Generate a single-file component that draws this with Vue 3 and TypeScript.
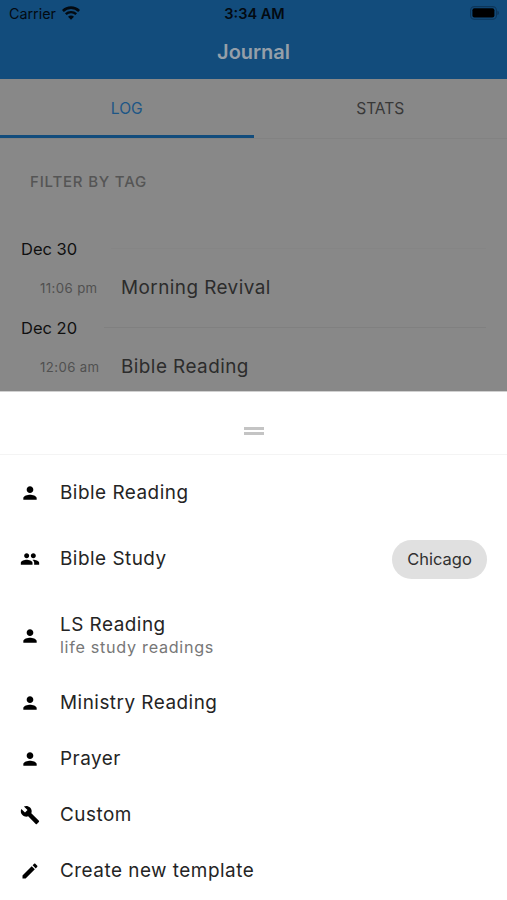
<script setup lang="ts">
type IconName = 'person' | 'people' | 'build' | 'edit'

interface Template {
  label: string
  icon: IconName
  kind?: 'tagged' | 'detailed'
  note?: string
  tag?: string
}

interface Entry {
  day: string
  time: string
  title: string
}

const icons: Record<IconName, string> = {
  person: 'M12 12c2.21 0 4-1.79 4-4s-1.79-4-4-4-4 1.79-4 4 1.79 4 4 4zm0 2c-2.67 0-8 1.34-8 4v2h16v-2c0-2.66-5.33-4-8-4z',
  people: 'M16 11c1.66 0 2.99-1.34 2.99-3S17.66 5 16 5c-1.66 0-3 1.34-3 3s1.34 3 3 3zm-8 0c1.66 0 2.99-1.34 2.99-3S9.66 5 8 5C6.34 5 5 6.34 5 8s1.34 3 3 3zm0 2c-2.33 0-7 1.17-7 3.5V19h14v-2.5c0-2.33-4.67-3.5-7-3.5zm8 0c-.29 0-.62.02-.97.05 1.16.84 1.97 1.97 1.97 3.45V19h6v-2.5c0-2.33-4.67-3.5-7-3.5z',
  build: 'M22.7 19l-9.1-9.1c.9-2.3.4-5-1.5-6.9-2-2-5-2.4-7.4-1.3L9 6 6 9 1.6 4.7C.4 7.1.9 10.1 2.9 12.1c1.9 1.9 4.6 2.4 6.9 1.5l9.1 9.1c.4.4 1 .4 1.4 0l2.3-2.3c.5-.4.5-1.1.1-1.4z',
  edit: 'M3 17.25V21h3.75L17.81 9.94l-3.75-3.75L3 17.25zM20.71 7.04c.39-.39.39-1.02 0-1.41l-2.34-2.34c-.39-.39-1.02-.39-1.41 0l-1.83 1.83 3.75 3.75 1.83-1.83z',
}

const entries: Entry[] = [
  { day: 'Dec 30', time: '11:06 pm', title: 'Morning Revival' },
  { day: 'Dec 20', time: '12:06 am', title: 'Bible Reading' },
]

const templates: Template[] = [
  { label: 'Bible Reading', icon: 'person' },
  { label: 'Bible Study', icon: 'people', kind: 'tagged', tag: 'Chicago' },
  { label: 'LS Reading', icon: 'person', kind: 'detailed', note: 'life study readings' },
  { label: 'Ministry Reading', icon: 'person' },
  { label: 'Prayer', icon: 'person' },
  { label: 'Custom', icon: 'build' },
  { label: 'Create new template', icon: 'edit' },
]
</script>

<template>
  <div class="screen">
    <div class="page">
      <header class="bar">
        <div class="status">
          <div class="carrier">
            <span>Carrier</span>
            <svg class="wifi" viewBox="0 0 18 14" fill="none" stroke="#030a11">
              <path d="M.9 5C5.5.5 12.5.5 17.1 5" stroke-width="2.6" />
              <path d="M3.8 8.2C6.7 5.4 11.3 5.4 14.2 8.2" stroke-width="2.4" />
              <path d="M9 13.8L6 10.8C7.7 9.2 10.3 9.2 12 10.8Z" fill="#030a11" stroke="none" />
            </svg>
          </div>
          <span class="clock">3:34 AM</span>
          <svg class="battery" viewBox="0 0 30 14">
            <rect x=".6" y=".6" width="25.8" height="12.6" rx="3.8" fill="none" stroke="#0d365a" stroke-width="1.1" />
            <rect x="2.4" y="2.3" width="22" height="9.2" rx="2" fill="#000" />
            <path d="M27.4 4.7c2 .6 2 3.8 0 4.4z" fill="#0d365a" />
          </svg>
        </div>
        <h1 class="title">Journal</h1>
      </header>
      <nav class="tabs">
        <span class="tab active">LOG</span>
        <span class="tab">STATS</span>
      </nav>
      <p class="filter">FILTER BY TAG</p>
      <section v-for="entry in entries" :key="entry.day" class="day">
        <div class="date"><span>{{ entry.day }}</span><i class="rule"></i></div>
        <div class="entry">
          <span class="time">{{ entry.time }}</span>
          <span class="name">{{ entry.title }}</span>
        </div>
      </section>
    </div>
    <div class="sheet">
      <div class="handle"><i></i><i></i></div>
      <ul class="list">
        <li v-for="item in templates" :key="item.label" class="row" :class="item.kind">
          <svg class="icon" viewBox="0 0 24 24"><path :d="icons[item.icon]" /></svg>
          <div class="text">
            <span class="label">{{ item.label }}</span>
            <span v-if="item.note" class="note">{{ item.note }}</span>
          </div>
          <span v-if="item.tag" class="chip">{{ item.tag }}</span>
        </li>
      </ul>
    </div>
  </div>
</template>

<style>
body {
  margin: 0;
  background: #fff;
}
</style>

<style scoped>
.screen {
  display: flex;
  flex-direction: column;
  width: 507px;
  height: 900px;
  overflow: hidden;
  font-family: Inter, "Liberation Sans", sans-serif;
  white-space: nowrap;
}
.page {
  height: 391px;
  flex: none;
  overflow: hidden;
  background: #888;
}
.bar {
  height: 79px;
  background: #124c7c;
}
.status {
  display: grid;
  grid-template-columns: 1fr auto 1fr;
  align-items: center;
  height: 27px;
  padding: 0 7px 0 9px;
  color: #030a11;
}
.carrier {
  display: flex;
  align-items: center;
  gap: 6px;
  font-size: 14.3px;
}
.wifi {
  width: 18px;
  height: 14px;
  margin-bottom: 1px;
}
.clock {
  font-size: 14.5px;
  font-weight: 600;
}
.battery {
  justify-self: end;
  width: 30px;
  height: 14px;
  margin-bottom: 1px;
}
.title {
  margin: 0;
  height: 50px;
  line-height: 50px;
  text-align: center;
  font-size: 20px;
  font-weight: 600;
  letter-spacing: -0.05px;
  color: #959fa9;
}
.tabs {
  display: flex;
  height: 60px;
  box-sizing: border-box;
  border-bottom: 1px solid #828282;
}
.tab {
  flex: 1;
  height: 56px;
  line-height: 60px;
  text-align: center;
  font-size: 15.6px;
  color: #383838;
}
.active {
  color: #1d5686;
  border-bottom: 3px solid #124c7c;
}
.filter {
  margin: 33px 0 0 30px;
  height: 20px;
  line-height: 20px;
  font-size: 15px;
  font-weight: 500;
  letter-spacing: 0.8px;
  color: #555;
}
.day {
  height: 79px;
}
.filter + .day {
  margin-top: 42px;
}
.date {
  display: flex;
  align-items: center;
  height: 28px;
  padding: 0 21px;
  gap: 27px;
  font-size: 16.5px;
  color: #101010;
}
.date span {
  padding-top: 1px;
}
.rule {
  flex: 1;
  height: 1px;
  background: #808080;
}
.filter + .day .rule {
  margin-left: 7px;
  background: #858585;
}
.entry {
  display: flex;
  align-items: center;
  height: 50px;
  padding-left: 40px;
}
.time {
  width: 81px;
  padding-top: 2px;
  font-size: 13.2px;
  letter-spacing: 0.4px;
  color: #505050;
}
.name {
  font-size: 18.9px;
  letter-spacing: 0.45px;
  color: #2c2c2c;
}
.sheet {
  flex: 1;
  background: #fff;
}
.handle {
  display: flex;
  flex-direction: column;
  align-items: center;
  gap: 2px;
  height: 64px;
  padding-top: 35px;
  box-sizing: border-box;
  border-top: 1px solid #d0d0d0;
  border-bottom: 1px solid #f4f4f4;
}
.handle i {
  width: 20px;
  height: 3px;
  background: #c4c4c4;
}
.list {
  margin: 0;
  padding: 10px 0 0;
  list-style: none;
}
.row {
  display: flex;
  align-items: center;
  height: 56px;
  padding: 0 20px;
}
.tagged {
  height: 76px;
}
.detailed {
  height: 78px;
}
.icon {
  flex: none;
  width: 20px;
  height: 20px;
  margin: 0 20px 0 0;
  fill: #000;
}
.text {
  display: flex;
  flex-direction: column;
  flex: 1;
}
.label {
  line-height: 24px;
  font-size: 18.9px;
  letter-spacing: 0.5px;
  color: #242424;
}
.note {
  height: 22px;
  line-height: 20px;
  font-size: 16.2px;
  letter-spacing: 0.7px;
  color: #777;
}
.chip {
  width: 95px;
  height: 39px;
  line-height: 39px;
  border-radius: 20px;
  background: #e0e0e0;
  text-align: center;
  font-size: 16.5px;
  color: #303030;
}
</style>
